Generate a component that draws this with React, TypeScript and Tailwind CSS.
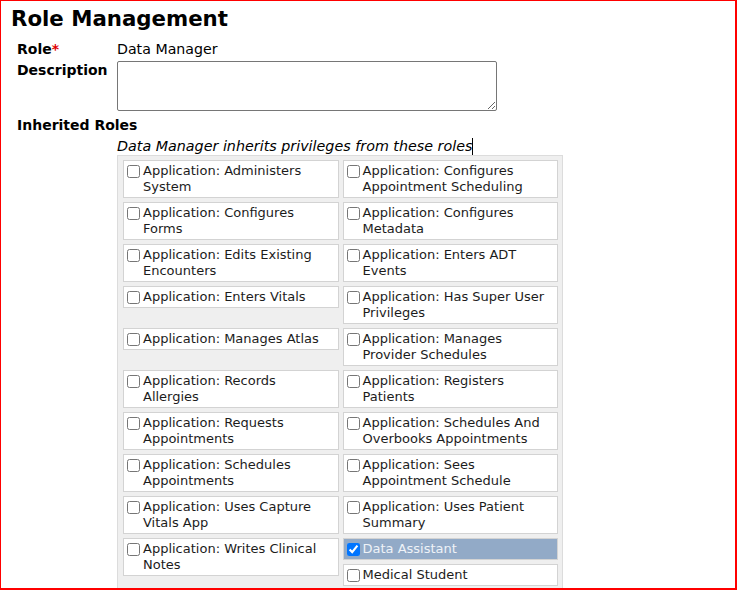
import clsx from "clsx";

type Role = { label: string; checked?: boolean };

// rows of the inherited roles box, left / right
const rows: [Role, Role[]][] = [
  [{ label: "Application: Administers System" }, [{ label: "Application: Configures Appointment Scheduling" }]],
  [{ label: "Application: Configures Forms" }, [{ label: "Application: Configures Metadata" }]],
  [{ label: "Application: Edits Existing Encounters" }, [{ label: "Application: Enters ADT Events" }]],
  [{ label: "Application: Enters Vitals" }, [{ label: "Application: Has Super User Privileges" }]],
  [{ label: "Application: Manages Atlas" }, [{ label: "Application: Manages Provider Schedules" }]],
  [{ label: "Application: Records Allergies" }, [{ label: "Application: Registers Patients" }]],
  [{ label: "Application: Requests Appointments" }, [{ label: "Application: Schedules And Overbooks Appointments" }]],
  [{ label: "Application: Schedules Appointments" }, [{ label: "Application: Sees Appointment Schedule" }]],
  [{ label: "Application: Uses Capture Vitals App" }, [{ label: "Application: Uses Patient Summary" }]],
  [
    { label: "Application: Writes Clinical Notes" },
    [{ label: "Data Assistant", checked: true }, { label: "Medical Student" }],
  ],
];

function RoleBox({ label, checked }: Role) {
  return (
    <label
      className={clsx(
        "flex items-start border border-[#d3d3d3] px-[3px] py-[2px] text-[13px] leading-[16px]",
        checked ? "bg-[#92aac7] text-[#eef2f7]" : "bg-white text-[#1c1c1c]"
      )}
    >
      <input
        type="checkbox"
        defaultChecked={checked}
        className="m-0 mt-[2px] mr-[3px] h-[13px] w-[13px] shrink-0"
      />
      <span>{label}</span>
    </label>
  );
}

export default function App() {
  return (
    <div className="relative min-h-screen bg-white font-['DejaVu_Sans',sans-serif] text-black">
      <h1 className="pl-[11px] pt-[6px] text-[21.3px] font-bold leading-[25px]">Role Management</h1>

      <div className="mt-[9px] grid grid-cols-[100px_auto] pl-[17px] text-[14px] leading-[18px]">
        <div className="font-bold">
          Role<span className="text-[#e00000]">*</span>
        </div>
        <div className="text-[14.2px]">Data Manager</div>

        <div className="mt-[3px] font-bold">Description</div>
        <div className="mt-[3px]">
          <textarea className="block h-[50px] w-[380px] rounded-[2px] border border-[#767676] bg-white" />
        </div>

        <div className="col-span-2 mt-[5px] font-bold">Inherited Roles</div>

        <div />
        <div className="mt-[4px] flex items-start text-[14.3px] italic leading-[17px]">
          <span>Data Manager inherits privileges from these roles</span>
          <span className="h-[17px] w-px bg-black" />
        </div>

        <div />
        <div className="grid w-[446px] grid-cols-2 items-start gap-[4px] border border-[#dcdcdc] bg-[#efefef] pb-[4px] pl-[5px] pr-[4px] pt-[4px]">
          {rows.map(([left, right], i) => (
            <div key={i} className="contents">
              <RoleBox {...left} />
              <div className="flex flex-col gap-[4px]">
                {right.map((r) => (
                  <RoleBox key={r.label} {...r} />
                ))}
              </div>
            </div>
          ))}
        </div>
      </div>

      {/* red frame drawn over the capture */}
      <div className="pointer-events-none fixed inset-0 border-b-2 border-l border-r-2 border-t border-[#ff0000]" />
    </div>
  );
}
